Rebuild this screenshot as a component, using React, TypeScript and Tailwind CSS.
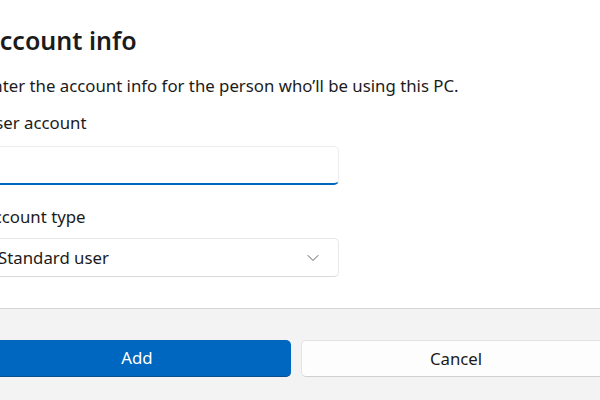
import { ChevronDown } from 'lucide-react';

export default function App() {
    return (
        <div className="w-[600px] h-[400px] overflow-hidden bg-white text-[#1b1b1b]" style={{ fontFamily: '"Segoe UI", "Noto Sans", sans-serif' }}>
            <div className="ml-[-47px] w-[688px]">
                {/* Content */}
                <div className="px-[30px] pt-[22px] pb-[31px] bg-white">
                    <h2 className="text-[25px] font-semibold leading-[36px]">Account info</h2>
                    <p className="mt-[16px] text-[16.8px] leading-[24px]">
                        Enter the account info for the person who’ll be using this PC.
                    </p>

                    <label className="block mt-[13px] text-[16.8px] leading-[24px]">User account</label>
                    <div className="mt-[11px] w-[356px] h-[39px] rounded-[5px] border border-[#ececec] border-b-2 border-b-[#0067c0] bg-white" />

                    <label className="block mt-[20px] text-[16.8px] leading-[24px]">Account type</label>
                    <div className="mt-[9px] w-[356px] h-[39px] rounded-[5px] border border-[#e8e8e8] border-b-[#d9d9d9] bg-white flex items-center justify-between pl-[14px] pr-[15px]">
                        <span className="text-[16.8px]">Standard user</span>
                        <ChevronDown size={20} strokeWidth={1.2} className="text-[#5f5f5f]" />
                    </div>
                </div>

                {/* Footer */}
                <div className="border-t border-[#d5d5d5] bg-[#f3f3f3] px-[30px] pt-[31px] pb-[30px] flex gap-[10px]">
                    <button className="flex-1 h-[37px] rounded-[5px] bg-[#0067c0] border-b border-b-[#0a4f8f] text-white text-[16.8px]">
                        Add
                    </button>
                    <button className="flex-1 h-[37px] rounded-[5px] bg-[#fdfdfd] border border-[#e3e3e3] border-b-[#d0d0d0] text-[#1b1b1b] text-[16.8px]">
                        Cancel
                    </button>
                </div>
            </div>
        </div>
    );
}
